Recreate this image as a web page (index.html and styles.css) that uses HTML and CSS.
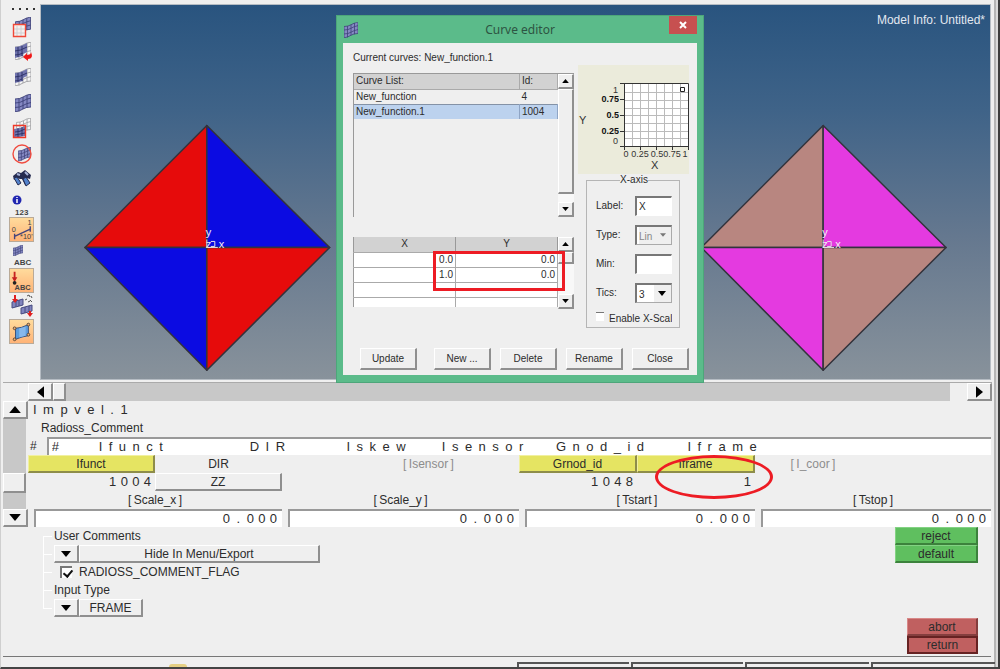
FILE: index.html
```html
<!DOCTYPE html>
<html lang="en">
<head>
<meta charset="utf-8">
<title>Curve editor</title>
<link rel="stylesheet" href="styles.css">
</head>
<body>
<svg class="defs" aria-hidden="true">
  <symbol id="mesh" viewBox="0 0 16 18">
    <path d="M0 5Q5 5 8 3T16 0V13Q11 13 8 15T0 18Z" fill="#8488c2"/>
    <path d="M0 5Q5 5 8 3T16 0V13Q11 13 8 15T0 18ZM0 9Q5 9 8 7T16 4M0 13.500Q5 13.500 8 11.500T16 8.500M4 4.500V17.500M8 3V15M12 1V14" fill="none" stroke="#3d4178" stroke-width="0.900"/>
  </symbol>
  <symbol id="wire" viewBox="0 0 16 18">
    <path d="M0 5Q5 5 8 3T16 0V13Q11 13 8 15T0 18ZM0 9Q5 9 8 7T16 4M0 13.500Q5 13.500 8 11.500T16 8.500M4 4.500V17.500M8 3V15M12 1V14" fill="#f7f7f7" stroke="#a5a5a8"/>
  </symbol>
  <symbol id="up" viewBox="0 0 10 6"><path d="M0 6L5 0L10 6Z"/></symbol>
  <symbol id="down" viewBox="0 0 10 6"><path d="M0 0H10L5 6Z"/></symbol>
</svg>

<div class="app">
  <div class="workspace">
    <nav class="toolbar" aria-label="Display tools">
      <div class="grip"><i></i><i></i><i></i><i></i></div>
      <div class="tools">
        <button class="tool" aria-label="Mask"><svg viewBox="0 0 25 25"><use href="#mesh" x="6" y="3" width="16" height="17"/><path d="M4 11H16V22H4Z" fill="#f5f0ee"/><path d="M5 15H16M5 19H16M8 12V22M12 12V22" stroke="#d0d0d4"/><path d="M4.500 10.500H16.500V22.500H4.500Z" fill="none" stroke="#f04838" stroke-width="1.400"/></svg></button>
        <button class="tool" aria-label="Reverse mask"><svg viewBox="0 0 25 25"><use href="#wire" x="6" y="3" width="16" height="18"/><path d="M6 8Q11 8 18 4V13L14 15V17L6 19Z" fill="#7074ae"/><path d="M6 12Q11 12 18 8M6 16Q10 16 14 14M9 8V18M13 7V17" fill="none" stroke="#30346a"/><path d="M14 18L18 14V16Q22 16 22 13Q25 20 19 20V22Z" fill="#f01818"/></svg></button>
        <button class="tool" aria-label="Unmask adjacent"><svg viewBox="0 0 25 25"><use href="#wire" x="6" y="3" width="16" height="18"/><path d="M6 8Q11 8 18 4V11L14 13V16L6 18Z" fill="#7074ae"/><path d="M6 12Q11 12 18 8M6 16Q10 16 13 14M9 8V17M13 7V16" fill="none" stroke="#30346a"/></svg></button>
        <button class="tool" aria-label="Unmask all"><svg viewBox="0 0 25 25"><use href="#mesh" x="6" y="4" width="16" height="18"/></svg></button>
        <button class="tool" aria-label="Unmask shown"><svg viewBox="0 0 25 25"><use href="#wire" x="7" y="2" width="15" height="16"/><path d="M5 13Q11 13 16 10V20L5 22Z" fill="#7074ae"/><path d="M6 16Q11 16 16 13M6 19L16 17M9 12V21M13 11V20" fill="none" stroke="#30346a"/><path d="M4.500 9.500H16.500V21.500H4.500Z" fill="none" stroke="#f03828" stroke-width="1.400"/></svg></button>
        <button class="tool" aria-label="Spherical clipping"><svg viewBox="0 0 25 25"><use href="#mesh" x="9" y="6" width="13" height="14"/><circle cx="13" cy="13" r="9" fill="none" stroke="#f04c40" stroke-width="1.400"/></svg></button>
        <button class="tool" aria-label="Find"><svg viewBox="0 0 25 25"><path d="M4 10L9 6L12 7L16 4L22 9L21 13L18 12L20 17L16 19L13 13L11 13L8 12L5 14Z" fill="#252b50"/><path d="M5 12L8 11L12 17L9 19ZM14 13L17 11L21 17L17 20Z" fill="#5282cc" stroke="#252b50"/><path d="M8 8L11 9M16 6L19 9" stroke="#a8b4da" stroke-width="2"/></svg></button>
        <button class="tool" aria-label="Numbers"><svg viewBox="0 0 25 25"><circle cx="8" cy="8" r="4.500" fill="#2026b0"/><path d="M8 7V11M8 5V6" stroke="#fff" stroke-width="1.500"/><text class="tag" x="6" y="23">123</text></svg></button>
        <button class="tool on" aria-label="Load scale"><svg viewBox="0 0 25 25"><path d="M5 17V23M22 9V15M5 20L22 12" stroke="#44447c" stroke-width="1.500" fill="none"/><text class="mini" x="2" y="15">0</text><text class="mini" x="19" y="8">1</text><text class="mini" x="11" y="23">*10'</text></svg></button>
        <button class="tool" aria-label="Element labels"><svg viewBox="0 0 25 25"><use href="#mesh" x="4" y="3" width="10" height="11"/><text class="tag" x="5" y="23">ABC</text></svg></button>
        <button class="tool on" aria-label="Load labels"><svg viewBox="0 0 25 25"><path d="M4 3H6V9H8L5 14L2 9H4Z" fill="#c62020"/><circle cx="5" cy="15" r="2" fill="#222"/><text class="tag" x="5" y="23">ABC</text></svg></button>
        <button class="tool" aria-label="Transfer loads"><svg viewBox="0 0 25 25"><path d="M3 9L14 6V12L3 15ZM12 15L23 12V18L12 21Z" fill="#8084bd" stroke="#484c80"/><path d="M7 8V14M10 7V13M16 14V20M20 13V19" stroke="#484c80"/><path d="M5 2H7V6H9L6 10L3 6H5ZM20 18H22V20H24L21 24L18 20H20Z" fill="#df2020"/><path d="M18 3L20 2L21 4M22 3L23 5M16 7L18 6M19 9L21 8M21 7L23 9" stroke="#555" fill="none"/></svg></button>
        <button class="tool on" aria-label="Shell faces"><svg viewBox="0 0 25 25"><path d="M6 9Q12 9 20 5V17Q13 18 6 21Z" fill="#5e9ddd" stroke="#334b78"/><path d="M10 9Q14 8 17 7V17L10 19Z" fill="#87b8eb"/><g fill="#f2b176" stroke="#554434"><circle cx="5" cy="9" r="1.500"/><circle cx="20" cy="5" r="1.500"/><circle cx="20" cy="16" r="1.500"/><circle cx="5" cy="21" r="1.500"/></g></svg></button>
      </div>
    </nav>

    <main class="view">
      <svg class="model" viewBox="0 0 950 373" aria-label="Model view">
        <g stroke="#33333c" stroke-width="1.500" stroke-linejoin="round">
          <path d="M166 242V120L44 242Z" fill="#e60b0b"/><path d="M166 242V120L289 242Z" fill="#0b0be2"/>
          <path d="M166 242V365L44 242Z" fill="#0b0be2"/><path d="M166 242V365L289 242Z" fill="#e60b0b"/>
          <path d="M783 242V120L661 242Z" fill="#b88680"/><path d="M783 242V120L906 242Z" fill="#e43ae0"/>
          <path d="M783 242V365L661 242Z" fill="#e43ae0"/><path d="M783 242V365L906 242Z" fill="#b88680"/>
        </g>
        <g class="axes"><text x="165" y="231">y</text><text x="165" y="243">z</text><text x="178" y="243">x</text><path d="M166 242V234M166 242H177M170 236H174V241H170"/></g>
        <g class="axes"><text x="782" y="231">y</text><text x="782" y="243">z</text><text x="795" y="243">x</text><path d="M783 242V234M783 242H794M787 236H791V241H787"/></g>
      </svg>
      <div class="info">Model Info: Untitled*</div>

      <section class="dialog" role="dialog" aria-labelledby="dlg-title">
        <header class="titlebar">
          <svg class="dlg-icon" viewBox="0 0 16 18"><use href="#mesh"/></svg>
          <h1 id="dlg-title">Curve editor</h1>
          <button class="close" aria-label="Close window"><svg viewBox="0 0 8 8"><path d="M1 1L7 7M7 1L1 7" stroke="#fff" stroke-width="2"/></svg></button>
        </header>
        <div class="dlg-body">
          <p class="current">Current curves: New_function.1</p>
          <div class="columns">
            <div class="left">
              <div class="list">
                <table class="curves">
                  <thead><tr><th>Curve List:</th><th class="id">Id:</th></tr></thead>
                  <tbody><tr><td>New_function</td><td>4</td></tr><tr class="sel"><td>New_function.1</td><td>1004</td></tr></tbody>
                </table>
                <div class="vbar"><button aria-label="Scroll list up"><svg><use href="#up"/></svg></button><span class="thumb tall"></span><span class="rest"></span><button aria-label="Scroll list down"><svg><use href="#down"/></svg></button></div>
              </div>
              <div class="points">
                <table class="xy">
                  <thead><tr><th>X</th><th>Y</th></tr></thead>
                  <tbody><tr><td>0.0</td><td>0.0</td></tr><tr><td>1.0</td><td>0.0</td></tr><tr><td></td><td></td></tr><tr class="part"><td></td><td></td></tr></tbody>
                </table>
                <div class="vbar"><button aria-label="Scroll points up"><svg><use href="#up"/></svg></button><span class="thumb short"></span><span class="rest"></span><button aria-label="Scroll points down"><svg><use href="#down"/></svg></button></div>
                <div class="mark-box"></div>
              </div>
            </div>
            <div class="right">
              <svg class="chart" viewBox="0 0 111 109" aria-label="Curve plot">
                <path d="M46 19H110V82H46Z" fill="#fff"/>
                <path d="M54.500 19V82M62.500 19V82M70.500 19V82M78.500 19V82M86.500 19V82M94.500 19V82M102.500 19V82M46 27.500H110M46 35.500H110M46 43.500H110M46 50.500H110M46 58.500H110M46 66.500H110M46 73.500H110" stroke="#bbb"/>
                <path d="M42 18.500H110.500V85M46.500 18V85M42 81.500H111M42 34.500H46M42 50.500H46M42 66.500H46M62.500 81V85M78.500 81V85M94.500 81V85" fill="none" stroke="#333"/>
                <path d="M102.500 22.500H106.500V26.500H102.500Z" fill="#fff" stroke="#222"/>
                <g text-anchor="end"><text x="40" y="28">1</text><text class="b" x="41" y="37">0.75</text><text class="b" x="41" y="53">0.5</text><text class="b" x="41" y="69">0.25</text><text x="40" y="79">0</text></g>
                <g text-anchor="middle"><text x="48" y="92">0</text><text x="62" y="92">0.25</text><text x="79" y="92">0.5</text><text x="94" y="92">0.75</text><text x="107" y="92">1</text></g>
                <text class="name" x="1" y="59">Y</text><text class="name" x="73" y="104">X</text>
              </svg>
              <fieldset class="axis">
                <legend>X-axis</legend>
                <label for="a-label">Label:</label><input id="a-label" type="text" value="X">
                <label for="a-type">Type:</label><span class="drop"><select id="a-type" disabled><option>Lin</option></select><svg><use href="#down"/></svg></span>
                <label for="a-min">Min:</label><input id="a-min" type="text">
                <label for="a-tics">Tics:</label><span class="drop"><select id="a-tics"><option>3</option></select><svg><use href="#down"/></svg></span>
                <label class="scale"><input type="checkbox"><span>Enable X-Scale</span></label>
              </fieldset>
            </div>
          </div>
          <div class="actions"><button class="update">Update</button><button>New ...</button><button>Delete</button><button>Rename</button><button>Close</button></div>
        </div>
      </section>
    </main>
  </div>

  <div class="hbar"><button aria-label="Scroll left"><svg viewBox="0 0 6 10"><path d="M6 0V10L0 5Z"/></svg></button><span class="hthumb"></span><span class="track"></span><span class="gap"></span><button aria-label="Scroll right"><svg viewBox="0 0 6 10"><path d="M0 0V10L6 5Z"/></svg></button></div>

  <div class="card">
    <div class="cardbar"><button aria-label="Scroll card up"><svg><use href="#up"/></svg></button><span class="track"></span><span class="cthumb"></span><span class="track low"></span><button aria-label="Scroll card down"><svg><use href="#down"/></svg></button></div>
    <div class="fields">
      <div class="row wide name-row">I&#8194;m&#8194;p&#8194;v&#8194;e&#8194;l&#8194;.&#8194;1</div>
      <label class="row comment-label" for="comment">Radioss_Comment</label>
      <div class="row comment"><span>#</span>
        <input id="comment" class="wide" type="text" value="#           I&#8194;f&#8194;u&#8194;n&#8194;c&#8194;t                        D&#8194;I&#8194;R                 I&#8194;s&#8194;k&#8194;e&#8194;w          I&#8194;s&#8194;e&#8194;n&#8194;s&#8194;o&#8194;r         G&#8194;n&#8194;o&#8194;d&#8194;_&#8194;i&#8194;d            I&#8194;f&#8194;r&#8194;a&#8194;m&#8194;e"></div>
      <div class="row eight">
        <button class="key">Ifunct</button><span>DIR</span><span></span><span class="off">[&thinsp;Isensor&thinsp;]</span><span></span><button class="key">Grnod_id</button><div class="framed"><button class="key">Iframe</button><i class="mark-ring"></i></div><span class="off">[&thinsp;I_coor&thinsp;]</span>
      </div>
      <div class="row eight">
        <span class="num">1&#8196;0&#8196;0&#8196;4</span><button class="raised">ZZ</button><span></span><span></span><span></span><span class="num">1&#8196;0&#8196;4&#8196;8</span><span class="num">1</span>
      </div>
      <div class="row four"><label for="sx">[&thinsp;Scale_x&thinsp;]</label><label for="sy">[&thinsp;Scale_y&thinsp;]</label><label for="ts">[&thinsp;Tstart&thinsp;]</label><label for="tp">[&thinsp;Tstop&thinsp;]</label></div>
      <div class="row four values"><span><input id="sx" type="text" value="0&#8194;.&#8194;0&#8196;0&#8196;0"></span><span><input id="sy" type="text" value="0&#8194;.&#8194;0&#8196;0&#8196;0"></span><span><input id="ts" type="text" value="0&#8194;.&#8194;0&#8196;0&#8196;0"></span><span><input id="tp" type="text" value="0&#8194;.&#8194;0&#8196;0&#8196;0"></span></div>
    </div>
  </div>

  <div class="options">
    <ul class="tree">
      <li>User Comments</li>
      <li><button class="raised arrow" aria-label="Choose user comments"><svg><use href="#down"/></svg></button><button class="raised hide">Hide In Menu/Export</button></li>
      <li><label class="flag"><input type="checkbox" checked>RADIOSS_COMMENT_FLAG</label></li>
      <li>Input Type</li>
      <li><button class="raised arrow" aria-label="Choose input type"><svg><use href="#down"/></svg></button><button class="raised frame">FRAME</button></li>
    </ul>
    <div class="commands">
      <button class="green">reject</button><button class="green">default</button>
      <button class="red first">abort</button><button class="red focus">return</button>
    </div>
  </div>
  <div class="status"><span class="lamp"></span><i></i><i></i><i></i><i></i></div>
</div>
</body>
</html>
```

FILE: styles.css
```css
* { box-sizing: border-box; }
body {
  margin: 0;
  background: #efefef;
  color: #2c2c2c;
  font: 12px/18px "Liberation Sans", Arial, sans-serif;
}
button, input, select { font: inherit; color: inherit; border-radius: 0; margin: 0; }
button { padding: 0; border: 0; background: #efefef; display: flex; align-items: center; justify-content: center; }
.defs { position: absolute; width: 0; height: 0; }

.app {
  min-height: 100vh;
  display: flex;
  flex-direction: column;
  padding: 5px 3px 0 2px;
  border-left: 1px solid #cfcfcf;
  border-right: 2px solid #3c3c3c;
  border-bottom: 2px solid #444;
  box-shadow: inset -2px 0 #dadada, inset -4px 0 #b5b5b5;
}

/* Toolbar and model view */
.workspace { flex: 1; display: flex; min-height: 373px; padding-right: 5px; }
.toolbar { width: 38px; flex: none; padding: 3px 0 0 6px; }
.grip { display: flex; gap: 5px; padding-left: 3px; height: 6px; }
.grip i { width: 2px; height: 2px; background: #333; }
.tools { height: 330px; display: grid; grid-auto-rows: 1fr; }
.tool { width: 25px; height: 25px; background: none; }
.tool svg { width: 25px; height: 25px; }
.tool.on { background: linear-gradient(#ffdb9c, #ffb377); border: 1px solid #b9aa98; }
.tag { font: bold 8px "Liberation Sans", Arial, sans-serif; fill: #444; }
.mini { font: 8px "Liberation Sans", Arial, sans-serif; fill: #444; }

.view {
  flex: 1;
  position: relative;
  background: linear-gradient(#29547f 0%, #3f6388 28%, #65788f 62%, #88929b 100%);
  box-shadow: 0 0 0 1px #b5bcc3;
}
.model { display: block; width: 100%; height: 100%; }
.axes text { font: 11px "Liberation Sans", Arial, sans-serif; fill: #f3eef3; }
.axes path { stroke: #e6dfe6; fill: none; }
.info { position: absolute; top: 6px; right: 5px; color: #e2e8f0; }

/* Curve editor window */
.dialog {
  position: absolute;
  left: 295px;
  top: 10px;
  width: 368px;
  z-index: 2;
  padding: 0 6px 7px;
  background: #5bbb8a;
  border: 1px solid #4da67a;
  font-size: 10px;
  line-height: 14px;
}
.titlebar { display: grid; grid-template-columns: 28px 1fr 28px; height: 27px; }
.titlebar h1 { margin: 0; font: 12px/28px "Noto Sans", "Open Sans", sans-serif; text-align: center; color: #2d5442; }
.dlg-icon { width: 14px; height: 16px; margin-left: 1px; align-self: center; }
.close { height: 18px; background: #c75050; }
.close svg { width: 8px; height: 8px; }
.dlg-body { background: #efefef; padding: 8px 8px 5px 10px; }
.current { margin: 0; }
.columns { display: grid; grid-template-columns: 221px 111px; gap: 4px; }
.left { padding-top: 8px; display: grid; grid-template-rows: 144px 72px; gap: 20px; align-content: start; }
.list, .points { display: flex; align-items: flex-start; }
.list { border: 1px solid #999; border-right: 0; border-bottom: 0; }
table { border-collapse: collapse; table-layout: fixed; }
th, td { font-weight: normal; text-align: left; padding: 0 2px; line-height: 14px; height: 15px; }
.curves { flex: 1; }
.curves th { background: #d2d2d2; border-right: 1px solid #aaa; border-bottom: 1px solid #aaa; }
.curves .id { width: 38px; }
.sel td { background: #bcd2ee; border-right: 1px solid #8fa5c5; border-top: 1px solid #8492a6; }
.vbar { width: 16px; align-self: stretch; display: flex; flex-direction: column; background: #f8f8f8; }
.vbar button { height: 15px; }
.vbar svg { width: 7px; height: 4px; }
.vbar button, .thumb, .actions button, .raised, .hthumb, .hbar button, .cardbar button, .cthumb {
  background: #efefef;
  border: solid;
  border-width: 1px 2px 2px 1px;
  border-color: #fff #8f8f8f #8f8f8f #fff;
}
.tall { height: 105px; }
.short { height: 12px; }
.rest { flex: 1; }
.points { position: relative; }
.xy { flex: 1; border-left: 1px solid #999; }
.xy th { background: #d2d2d2; text-align: center; border-right: 1px solid #999; }
.xy td { background: #fff; text-align: right; border: 1px solid #aaa; border-width: 1px 1px 0 0; }
.xy .part td { height: 10px; }
.mark-box { position: absolute; left: 80px; top: 14px; width: 132px; height: 40px; border: 3px solid #ed1c24; }

.chart { display: block; width: 111px; height: 109px; background: #ebebdb; }
.chart text { font: 9px "Liberation Sans", Arial, sans-serif; fill: #333; }
.chart .b { font-weight: bold; fill: #111; }
.chart .name { font-size: 11px; }
.axis {
  position: relative;
  margin: 0 9px 0 8px;
  padding: 10px 7px 0 9px;
  border: 1px solid #b5b5b5;
  display: grid;
  grid-template-columns: 39px 37px;
  row-gap: 9px;
  line-height: 20px;
  min-width: 0;
}
.axis legend { margin: 0 auto; padding: 0; line-height: 12px; }
.axis > input, .drop {
  width: 100%;
  height: 20px;
  padding: 0 0 0 2px;
  background: #fff;
  border: solid;
  border-width: 2px 1px 1px 2px;
  border-color: #777 #fff #fff #777;
}
.drop { position: relative; border-color: #777 #aaa #aaa #777; }
.drop select { display: block; appearance: none; width: 100%; height: 17px; border: 0; padding: 0; background: linear-gradient(90deg, #fff 15px, #efefef 15px); opacity: 1; }
.drop select:disabled { color: #888; background: #efefef; }
.drop svg { position: absolute; right: 5px; top: 6px; width: 8px; height: 5px; pointer-events: none; }
.drop select:disabled + svg { fill: #777; width: 6px; height: 4px; }
.scale { grid-column: 1 / 3; display: flex; gap: 5px; line-height: 14px; height: 15px; overflow: hidden; white-space: nowrap; }
.scale span { overflow: hidden; }
.scale input { appearance: none; flex: none; width: 8px; height: 9px; background: #fff; border-top: 1px solid #777; }
.actions { display: flex; gap: 9px; padding-left: 7px; margin-top: 20px; }
.actions button { width: 57px; height: 22px; }
.actions .update { margin-right: 8px; }

/* Horizontal scrollbar */
.hbar { display: flex; height: 19px; margin: 3px 3px 0 0; padding-left: 25px; border-top: 1px solid #aaa; }
.hbar button { width: 25px; }
.hbar svg { width: 7px; height: 12px; }
.hthumb { width: 13px; }
.track { flex: 1; background: #c8c8c8; }
.gap { width: 17px; }

/* Card fields */
.card { display: flex; padding-right: 4px; }
.cardbar { width: 25px; display: flex; flex-direction: column; }
.cardbar button { height: 18px; }
.cardbar svg { width: 12px; height: 7px; }
.cardbar .track { margin-right: 2px; }
.cardbar .low { flex: none; height: 16px; }
.cthumb { height: 20px; margin-right: 2px; }
.fields { flex: 1; min-width: 0; }
.row { height: 18px; }
.wide { font-size: 13px; white-space: pre; }
.name-row { padding-left: 5px; }
.comment-label { display: block; padding-left: 13px; }
.comment { display: flex; gap: 10px; padding-left: 2px; }
.comment input { flex: 1; min-width: 0; }
.fields input { border: 0; border-top: 2px solid #999; border-left: 2px solid #999; background: #fff; height: 18px; padding: 0 3px; }
.eight { display: grid; grid-template-columns: 127fr 127fr 88fr 117fr 32fr 118fr 118fr 116fr 120fr; text-align: center; }
.key, .raised { height: 18px; line-height: 14px; }
.key { background: #e5e462; border: solid; border-width: 1px 2px 2px 1px; border-color: #f1f0a0 #8e8d4a #8e8d4a #f1f0a0; }
.framed { position: relative; display: grid; }
.mark-ring { position: absolute; left: 18px; top: 0; width: 118px; height: 44px; border: 3px solid #ed1c24; border-radius: 50%; pointer-events: none; }
.off { color: #8d8d8d; }
.num { text-align: right; padding-right: 4px; font-size: 13px; }
.four { display: grid; grid-template-columns: 254fr 237fr 236fr 236fr; text-align: center; }
.values span { display: flex; padding-left: 6px; }
.values input { flex: 1; min-width: 0; width: 0; padding-right: 5px; text-align: right; font-size: 13px; }

/* Options */
.options { display: flex; justify-content: space-between; margin-right: 4px; padding: 0 13px 2px 40px; border-bottom: 1px solid #777; }
.tree { position: relative; list-style: none; margin: 0; padding: 0 0 0 11px; }
.tree::before { content: ""; position: absolute; left: 0; top: 9px; width: 1px; height: 73px; background: #fff; }
.tree li { position: relative; display: flex; height: 18px; }
.tree li::before { content: ""; position: absolute; left: -11px; top: 9px; width: 9px; height: 1px; background: #fff; }
.arrow { width: 25px; }
.arrow svg { width: 10px; height: 6px; }
.hide { width: 241px; }
.frame { width: 64px; }
.flag { display: flex; align-items: center; gap: 7px; padding-left: 6px; }
.flag input { appearance: none; width: 12px; height: 12px; background: #fff; border: solid; border-width: 2px 0 0 2px; border-color: #777; position: relative; }
.flag input:checked::after { content: ""; position: absolute; left: 3px; top: 0; width: 4px; height: 7px; border: solid #111; border-width: 0 2px 2px 0; transform: rotate(40deg); }
.commands { display: flex; flex-direction: column; align-items: flex-end; }
.commands button { height: 18px; line-height: 14px; border: solid; border-width: 1px 2px 2px 1px; }
.commands .green { width: 83px; background: #5fbf5f; border-color: #83d283 #3c823c #3c823c #83d283; }
.commands .red { width: 71px; background: #c06060; border-color: #d88888 #843e3e #843e3e #d88888; }
.commands .first { margin-top: 55px; }
.commands .focus { border: 2px solid #662222; }
.status { position: relative; display: grid; grid-template-columns: 112fr 112fr 125fr 124fr; gap: 2px; padding-left: 514px; height: 5px; margin-top: 5px; }
.status i { border-top: 2px solid #555; border-left: 2px solid #555; }
.lamp { position: absolute; left: 166px; top: 2px; width: 18px; height: 3px; border-radius: 9px 9px 0 0; background: #e5d084; }
```
